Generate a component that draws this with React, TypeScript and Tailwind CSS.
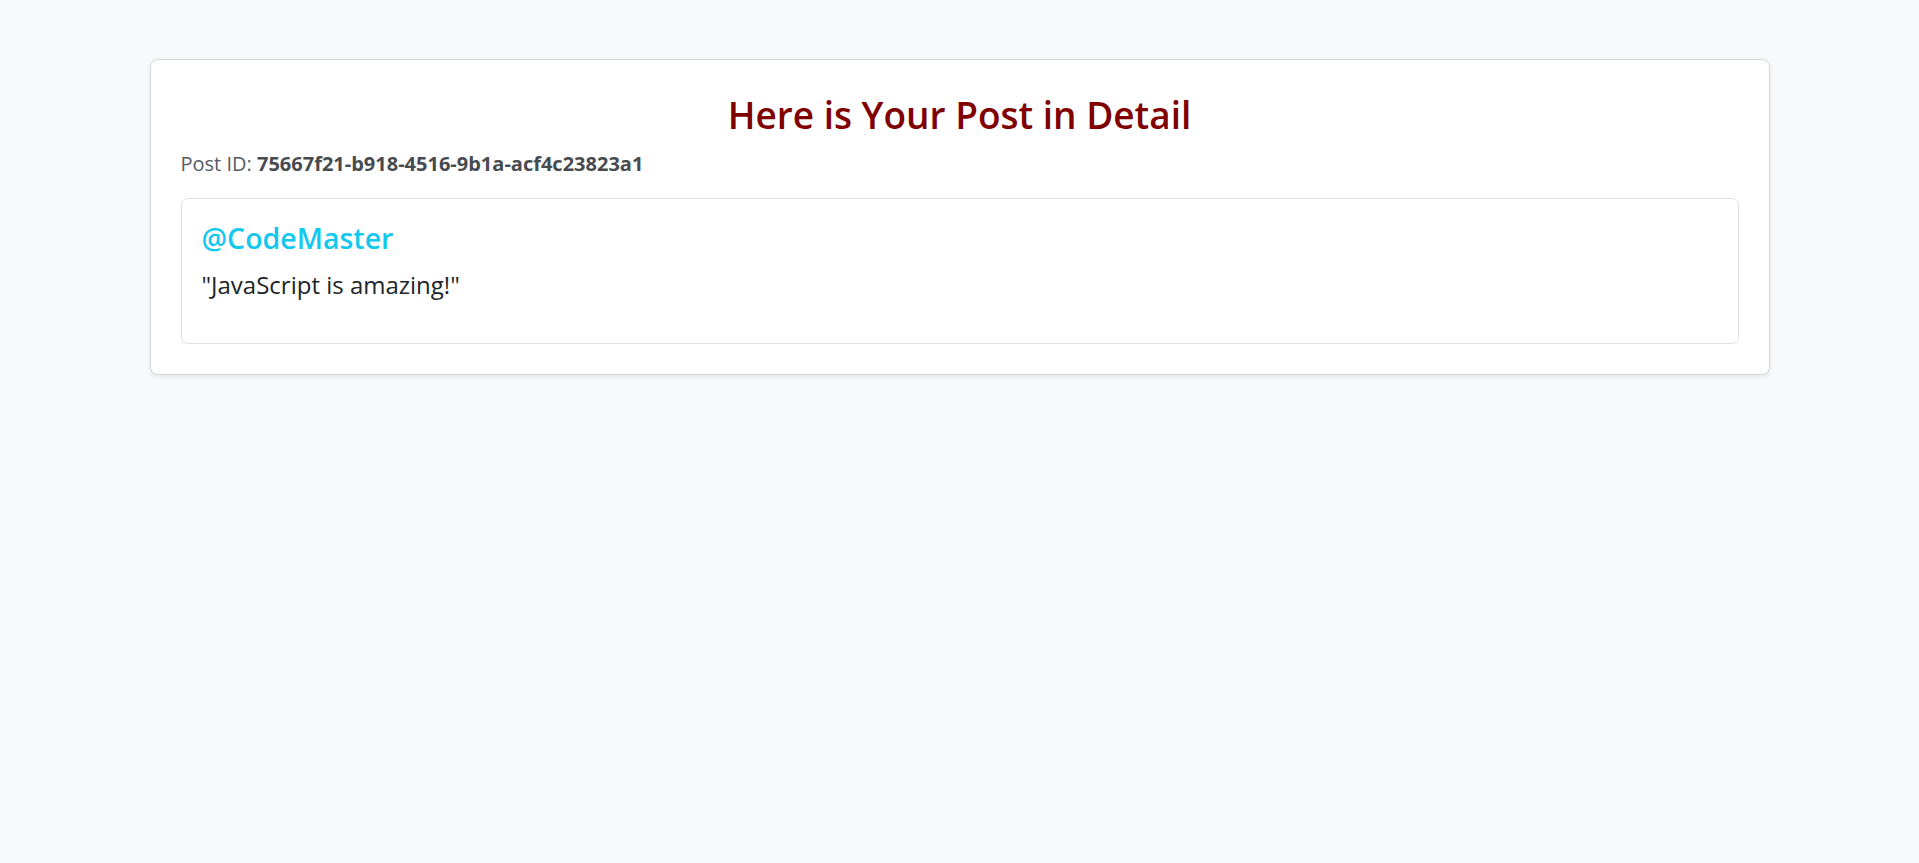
import React from "react";

// Post detail page

const post = {
  id: "75667f21-b918-4516-9b1a-acf4c23823a1",
  author: "CodeMaster",
  text: "JavaScript is amazing!",
};

export default function App() {
  return (
    <div
      className="min-h-screen bg-[#f8f9fa] pt-[59px]"
      style={{ fontFamily: '"Open Sans", "Noto Sans", sans-serif' }}
    >
      <div className="mx-auto w-[1620px] rounded-[8px] border border-[#d5d8db] bg-white p-[30px] shadow-[0_2px_5px_rgba(0,0,0,0.08)]">
        <h2 className="mb-[10px] pt-[1px] text-center text-[37px] font-semibold leading-[48px] text-[#800000]">
          Here is Your Post in Detail
        </h2>
        <p className="mb-[19px] text-[20px] leading-[30px] text-[#555b61]">
          Post ID: <span className="font-bold text-[#474b4f]">{post.id}</span>
        </p>

        <div className="rounded-[7px] border border-[#dee2e6] bg-white px-[20px] pt-[21px] pb-[20px]">
          <h4 className="mb-[10px] text-[28.5px] font-semibold leading-[36px] text-[#13c8ee]">
            @{post.author}
          </h4>
          <p className="mb-[20px] pt-[1px] text-[24px] leading-[36px] text-[#212529]">
            "{post.text}"
          </p>
        </div>
      </div>
    </div>
  );
}
